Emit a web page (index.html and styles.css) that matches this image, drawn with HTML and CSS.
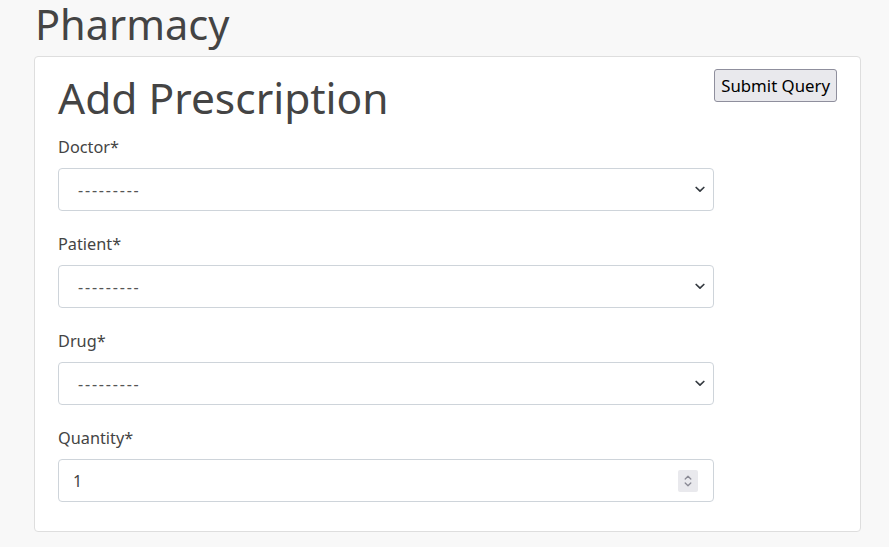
FILE: index.html
```html
<!DOCTYPE html>
<html lang="en">
<head>
<meta charset="utf-8">
<title>Pharmacy</title>
<link rel="stylesheet" href="styles.css">
</head>
<body>
<main class="page">
  <h1 class="page-title">Pharmacy</h1>
  <section class="card">
    <form class="rx-form">
      <div class="form-col">
        <h2 class="card-title">Add Prescription</h2>
        <div class="field">
          <label class="field-label" for="doctor">Doctor*</label>
          <div class="select-box">
            <select id="doctor" class="select"><option>---------</option></select>
            <svg class="chevron" width="10" height="7" viewBox="0 0 10 7"><path d="M1.2 1.5 L5 5.2 L8.8 1.5" fill="none" stroke="#343a40" stroke-width="1.7" stroke-linecap="round" stroke-linejoin="round"/></svg>
          </div>
        </div>
        <div class="field">
          <label class="field-label" for="patient">Patient*</label>
          <div class="select-box">
            <select id="patient" class="select"><option>---------</option></select>
            <svg class="chevron" width="10" height="7" viewBox="0 0 10 7"><path d="M1.2 1.5 L5 5.2 L8.8 1.5" fill="none" stroke="#343a40" stroke-width="1.7" stroke-linecap="round" stroke-linejoin="round"/></svg>
          </div>
        </div>
        <div class="field">
          <label class="field-label" for="drug">Drug*</label>
          <div class="select-box">
            <select id="drug" class="select"><option>---------</option></select>
            <svg class="chevron" width="10" height="7" viewBox="0 0 10 7"><path d="M1.2 1.5 L5 5.2 L8.8 1.5" fill="none" stroke="#343a40" stroke-width="1.7" stroke-linecap="round" stroke-linejoin="round"/></svg>
          </div>
        </div>
        <div class="field">
          <label class="field-label" for="qty">Quantity*</label>
          <div class="select-box number-box">
            <input id="qty" class="number-input" type="text" value="1">
            <span class="spinner">
              <svg width="10" height="16" viewBox="0 0 10 16"><path d="M2.2 6 L5 3.2 L7.8 6 M2.2 10 L5 12.8 L7.8 10" fill="none" stroke="#8a8a95" stroke-width="1.3" stroke-linecap="round" stroke-linejoin="round"/></svg>
            </span>
          </div>
        </div>
      </div>
      <div class="actions">
        <button type="submit" class="submit-btn">Submit Query</button>
      </div>
    </form>
  </section>
</main>
</body>
</html>
```

FILE: styles.css
```css
* { box-sizing: border-box; }
html, body { margin: 0; padding: 0; }
body {
  background: #f8f8f8;
  font-family: "Noto Sans", "Open Sans", sans-serif;
  color: #444444;
  font-size: 16px;
}
.page {
  width: 827px;
  margin-left: 34px;
}
.page-title {
  margin: 0 0 8px 0;
  font-size: 41.5px;
  font-weight: 400;
  line-height: 48px;
  padding-left: 1px;
}
.card {
  background: #ffffff;
  border: 1px solid #dedede;
  border-radius: 4px;
  padding: 12px 23px 8px 23px;
}
.rx-form {
  display: flex;
  align-items: flex-start;
}
.form-col {
  flex: 1;
  min-width: 0;
}
.card-title {
  margin: 5px 0 13px 0;
  font-size: 42.5px;
  font-weight: 400;
  line-height: 48px;
}
.field {
  margin-bottom: 21px;
}
.field-label {
  display: block;
  font-size: 16.3px;
  line-height: 25px;
  margin-bottom: 8px;
}
.select-box {
  display: flex;
  align-items: center;
  height: 43px;
  border: 1px solid #ced4da;
  border-radius: 4px;
  background: #fff;
  padding: 0 8px 0 19px;
}
.select {
  appearance: none;
  -webkit-appearance: none;
  border: none;
  outline: none;
  background: transparent;
  flex: 1;
  font-family: inherit;
  font-size: 16px;
  letter-spacing: 1.8px;
  color: #555;
  padding: 0;
}
.chevron { flex: none; }
.number-box { padding: 0 15px 0 14px; }
.number-input {
  flex: 1;
  border: none;
  outline: none;
  background: transparent;
  font-family: inherit;
  font-size: 16px;
  color: #444;
  padding: 0;
}
.spinner {
  display: flex;
  align-items: center;
  justify-content: center;
  width: 20px;
  height: 22px;
  background: #e9e9ed;
  border-radius: 2px;
}
.actions {
  flex: none;
}
.submit-btn {
  font-family: "Noto Sans", sans-serif;
  font-size: 16.8px;
  color: #000;
  background: #e9e9ed;
  border: 1px solid #8f8f9d;
  border-radius: 3px;
  height: 33px;
  padding: 0 6px;
  margin-top: 0;
}
```
